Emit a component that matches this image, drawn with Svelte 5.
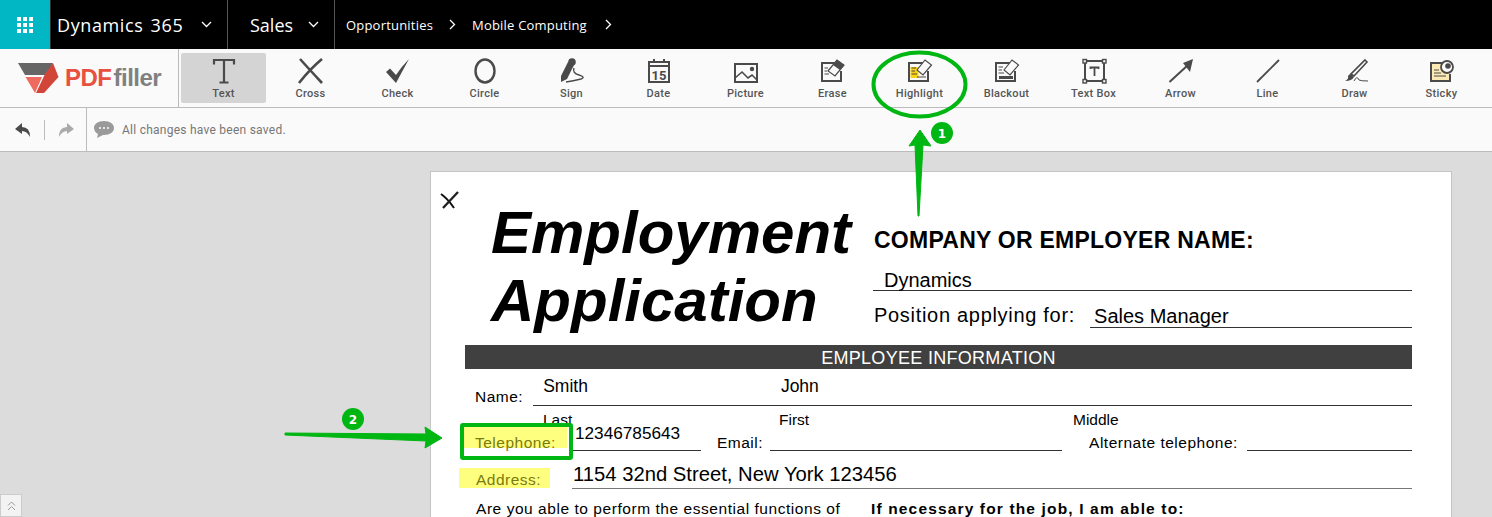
<script>
    const tools = [
        { id: 'text', label: 'Text', active: true },
        { id: 'cross', label: 'Cross' },
        { id: 'check', label: 'Check' },
        { id: 'circle', label: 'Circle' },
        { id: 'sign', label: 'Sign' },
        { id: 'date', label: 'Date' },
        { id: 'picture', label: 'Picture' },
        { id: 'erase', label: 'Erase' },
        { id: 'highlight', label: 'Highlight' },
        { id: 'blackout', label: 'Blackout' },
        { id: 'textbox', label: 'Text Box' },
        { id: 'arrow', label: 'Arrow' },
        { id: 'line', label: 'Line' },
        { id: 'draw', label: 'Draw' },
        { id: 'sticky', label: 'Sticky' }
    ];
</script>

<div class="page">
    <header class="topbar">
        <div class="waffle">
            <svg width="16" height="16" viewBox="0 0 16 16" fill="#fff">
                {#each [0, 6, 12] as y}
                    {#each [0, 6, 12] as x}
                        <rect x={x} y={y} width="4" height="4" />
                    {/each}
                {/each}
            </svg>
        </div>
        <div class="app-name">
            <span>Dynamics 365</span>
            <svg class="chev" width="11" height="7" viewBox="0 0 11 7"><path d="M1 1l4.500 4.500L10 1" /></svg>
        </div>
        <div class="area-name">
            <span>Sales</span>
            <svg class="chev" width="11" height="7" viewBox="0 0 11 7"><path d="M1 1l4.500 4.500L10 1" /></svg>
        </div>
        <nav class="crumbs">
            <span>Opportunities</span>
            <svg class="crumb-arrow" width="7" height="11" viewBox="0 0 7 11"><path d="M1 1l4.500 4.500L1 10" /></svg>
            <span>Mobile Computing</span>
            <svg class="crumb-arrow last" width="7" height="11" viewBox="0 0 7 11"><path d="M1 1l4.500 4.500L1 10" /></svg>
        </nav>
    </header>

    <div class="toolbar">
        <div class="logo">
            <svg width="41" height="31" viewBox="0 0 41 31">
                <path d="M0 0H35L28 12H7Z" fill="#666" />
                <path d="M7.500 14H24L17 30Z" fill="#ee6a5f" />
                <path d="M35 0L40.500 14L26 30H18L27 11Z" fill="#d2463a" />
            </svg>
            <span class="logo-pdf">PDF</span><span class="logo-filler">filler</span>
        </div>
        <div class="tools">
            {#each tools as tool}
                <div class="tool" class:active={tool.active}>
                    <svg class="tool-icon" width="30" height="30" viewBox="0 0 30 30">
                        {#if tool.id === 'text'}
                            <path d="M5 8.500V4H25V8.500M15 4V26M10.500 26.500H19.500" fill="none" stroke="#4a4a4a" stroke-width="2.200" />
                        {:else if tool.id === 'cross'}
                            <path d="M4 3Q13 13 26 27M26 3Q14 13 3 27" fill="none" stroke="#4a4a4a" stroke-width="2.600" />
                        {:else if tool.id === 'check'}
                            <path d="M3 16L7 12.500L13 19Q19 10 26 3Q20 14 13 27Z" fill="#4a4a4a" />
                        {:else if tool.id === 'circle'}
                            <ellipse cx="15" cy="15" rx="9.500" ry="11.500" fill="none" stroke="#4a4a4a" stroke-width="2.400" />
                        {:else if tool.id === 'sign'}
                            <path d="M4 26L4 20L11 6L17 9L10 23Z" fill="#4a4a4a" />
                            <circle cx="15" cy="6" r="3.800" fill="#4a4a4a" />
                            <path d="M17 12Q15 17 22 19Q29 21 24 23Q16 25 9 26" fill="none" stroke="#4a4a4a" stroke-width="1.400" />
                        {:else if tool.id === 'date'}
                            <path d="M5 6H25V26H5Z" fill="none" stroke="#4a4a4a" stroke-width="2" />
                            <path d="M5 10H25M10 3V7M20 3V7" stroke="#4a4a4a" stroke-width="2" />
                            <text x="15" y="23.500" class="cal">15</text>
                        {:else if tool.id === 'picture'}
                            <path d="M4 8H26V26H4Z" fill="none" stroke="#4a4a4a" stroke-width="2" />
                            <path d="M4 22L11 16L17 22L21 19L26 24" fill="none" stroke="#4a4a4a" stroke-width="1.600" />
                            <circle cx="21" cy="13" r="2.200" fill="#4a4a4a" />
                        {:else if tool.id === 'erase'}
                            <path d="M18 7H4V25H23V15" fill="none" stroke="#4a4a4a" stroke-width="2" />
                            <path d="M10 15L19 4L26 9L17 20Z" fill="#fafafa" stroke="#4a4a4a" stroke-width="1.200" />
                            <path d="M15 9L19 4L26 9L22 14Z" fill="#4a4a4a" />
                            <path d="M6.500 12H10M6.500 15H9M6.500 18H11" stroke="#4a4a4a" />
                        {:else if tool.id === 'highlight'}
                            <rect x="5.500" y="11" width="8" height="11" fill="#fdd20e" />
                            <path d="M18 7H4V25H23V15" fill="none" stroke="#4a4a4a" stroke-width="2" />
                            <path d="M12 14L20 4L26.500 9L18 19Z" fill="#fafafa" stroke="#4a4a4a" stroke-width="1.200" />
                            <path d="M6.500 12H11M6.500 15H10M6.500 18H12M12 21H21" stroke="#4a4a4a" />
                        {:else if tool.id === 'blackout'}
                            <path d="M18 7H4V25H23V15" fill="none" stroke="#4a4a4a" stroke-width="2" />
                            <path d="M12 14L20 4L26.500 9L18 19Z" fill="#fafafa" stroke="#4a4a4a" stroke-width="1.200" />
                            <rect x="7" y="20" width="14" height="3" fill="#4a4a4a" />
                            <path d="M6.500 11H11M6.500 14H10M6.500 17H12" stroke="#4a4a4a" />
                        {:else if tool.id === 'textbox'}
                            <path d="M6 5H25V25H6Z" fill="none" stroke="#4a4a4a" stroke-width="2" />
                            <g fill="#fafafa" stroke="#4a4a4a" stroke-width="1.400">
                                <rect x="4" y="3.500" width="3.500" height="3.500" />
                                <rect x="23.500" y="3.500" width="3.500" height="3.500" />
                                <rect x="4" y="23.500" width="3.500" height="3.500" />
                                <rect x="23.500" y="23.500" width="3.500" height="3.500" />
                            </g>
                            <path d="M11.500 13V11.500H19.500V13M15.500 11.500V20" fill="none" stroke="#4a4a4a" stroke-width="1.800" />
                        {:else if tool.id === 'arrow'}
                            <path d="M3.500 26L22 9" stroke="#4a4a4a" stroke-width="2" />
                            <path d="M27 3L17 7L24 16Z" fill="#4a4a4a" />
                        {:else if tool.id === 'line'}
                            <path d="M4 26L26 4" stroke="#4a4a4a" stroke-width="1.800" />
                        {:else if tool.id === 'draw'}
                            <path d="M25 4L27 6L14 20L11 18Z" fill="none" stroke="#4a4a4a" stroke-width="1.600" />
                            <path d="M11 18L14 21Q12 25 5 25Q9 23 8 20Q9 18 11 18Z" fill="#4a4a4a" />
                            <path d="M14 25Q17 19 19 24Q21 25 28 25" fill="none" stroke="#4a4a4a" />
                        {:else if tool.id === 'sticky'}
                            <path d="M4 7H18V15H23V25H4Z" fill="#fbeab5" />
                            <path d="M15 7H4V25H23V18" fill="none" stroke="#4a4a4a" stroke-width="2" />
                            <circle cx="20" cy="11" r="6" fill="#fafafa" stroke="#4a4a4a" stroke-width="1.800" />
                            <circle cx="21" cy="10" r="2.800" fill="#4a4a4a" />
                            <path d="M7 14H12M7 17H14M7 20H19" stroke="#4a4a4a" />
                        {/if}
                    </svg>
                    <span class="tool-label">{tool.label}</span>
                </div>
            {/each}
        </div>
    </div>

    <div class="statusbar">
        <div class="history">
            <svg width="18" height="14" viewBox="0 0 18 14" fill="#4a4a4a"><path d="M8 0L1 6L8 11V8Q13 8 16 14Q16 4 8 4Z" /></svg>
            <i class="sep"></i>
            <svg width="18" height="14" viewBox="0 0 18 14" fill="#aaa"><path d="M10 0L17 6L10 11V8Q5 8 2 14Q2 4 10 4Z" /></svg>
        </div>
        <div class="saved">
            <svg width="20" height="17" viewBox="0 0 20 17">
                <path d="M10 0C4 0 0 3 0 7C0 10 2 12 4 13L3 17L9 14H10C16 14 20 11 20 7C20 3 16 0 10 0Z" fill="#9a9a9a" />
                <g fill="#fff"><circle cx="6" cy="7" r="1" /><circle cx="10" cy="7" r="1" /><circle cx="14" cy="7" r="1" /></g>
            </svg>
            <span>All changes have been saved.</span>
        </div>
    </div>

    <main class="workspace">
        <div class="collapse">
            <svg width="9" height="10" viewBox="0 0 9 10"><path d="M1 4.500L4.500 1L8 4.500M1 9L4.500 5.500L8 9" /></svg>
        </div>
        <article class="sheet">
            <svg class="mark" width="20" height="20" viewBox="0 0 20 20">
                <path d="M1 3Q8 8 14 17" fill="none" stroke="#111" stroke-width="2" />
                <path d="M18 1L3 17" fill="none" stroke="#222" stroke-width="2.400" />
            </svg>
            <div class="head">
                <h1>Employment<br />Application</h1>
                <div class="company">
                    <h2>COMPANY OR EMPLOYER NAME:</h2>
                    <div class="filled company-name">Dynamics</div>
                    <div class="position">
                        <span>Position applying for:</span>
                        <div class="filled">Sales Manager</div>
                    </div>
                </div>
            </div>
            <div class="band">EMPLOYEE INFORMATION</div>
            <div class="name-row">
                <span class="lbl">Name:</span>
                <div class="name-line"><span>Smith</span><span class="first">John</span></div>
            </div>
            <div class="sub-row"><span>Last</span><span>First</span><span>Middle</span></div>
            <div class="tel-row">
                <span class="lbl mark-y tel">Telephone:</span>
                <span class="line tel-val">12346785643</span>
                <span class="lbl">Email:</span>
                <span class="line email"></span>
                <span class="lbl">Alternate telephone:</span>
                <span class="line alt"></span>
            </div>
            <div class="addr-row">
                <span class="lbl mark-y addr">Address:</span>
                <span class="line addr-val">1154 32nd Street, New York 123456</span>
            </div>
            <div class="para-row">
                <span>Are you able to perform the essential functions of</span>
                <b>If necessary for the job, I am able to:</b>
            </div>
        </article>

        <svg class="overlay" width="1492" height="517" viewBox="0 0 1492 517">
            <ellipse cx="919.500" cy="84.500" rx="46" ry="32" fill="none" stroke="#00b612" stroke-width="4" />
            <path d="M918 216L915 145L909 146L920 130L931 146L923 145L919 216Z" fill="#00b612" stroke="#00b612" stroke-linejoin="round" />
            <circle cx="942" cy="133" r="11" fill="#00b612" />
            <text x="942" y="137.500" class="num">1</text>
            <path d="M285 433L426 434L425 427L442 438L425 448L426 441L285 435Z" fill="#00b612" stroke="#00b612" stroke-linejoin="round" />
            <circle cx="353" cy="419" r="11" fill="#00b612" />
            <text x="353" y="423.500" class="num">2</text>
            <rect x="462" y="425" width="109" height="33" rx="1" fill="none" stroke="#00b612" stroke-width="4" />
        </svg>
    </main>
</div>

<style>
    :global(body) {
        margin: 0;
        overflow: hidden;
    }

    .page {
        width: 1492px;
        height: 517px;
        display: flex;
        flex-direction: column;
        overflow: hidden;
        font-family: "Liberation Sans", Arial, sans-serif;
    }

    .topbar {
        height: 49px;
        flex: none;
        display: flex;
        background: #000;
        color: #fff;
        font-family: "Open Sans", "Noto Sans", sans-serif;
    }

    .waffle {
        width: 50px;
        background: #00b7c3;
        display: flex;
        align-items: center;
        justify-content: center;
        border-right: 1px solid #333;
    }

    .app-name,
    .area-name {
        display: flex;
        align-items: center;
        border-right: 1px solid #555;
        font-size: 18px;
        box-sizing: border-box;
    }

    .app-name {
        width: 177px;
        padding-left: 6px;
        gap: 18px;
        letter-spacing: 0.6px;
        word-spacing: 2px;
    }

    .area-name {
        width: 107px;
        padding-left: 22px;
        gap: 15px;
    }

    .chev,
    .crumb-arrow {
        fill: none;
        stroke: #fff;
        stroke-width: 1.300;
    }

    .crumbs {
        display: flex;
        align-items: center;
        gap: 16px;
        padding-left: 11px;
        font-size: 13px;
        letter-spacing: 0.2px;
    }

    .crumb-arrow.last {
        margin-left: 2px;
    }

    .toolbar {
        height: 59px;
        flex: none;
        display: flex;
        background: #fafafa;
        border-bottom: 1px solid #bbb;
        box-sizing: border-box;
    }

    .logo {
        width: 179px;
        flex: none;
        box-sizing: border-box;
        border-right: 1px solid #bbb;
        display: flex;
        align-items: center;
        padding-left: 18px;
        font-weight: 700;
        font-size: 24px;
        letter-spacing: -0.5px;
    }

    .logo svg {
        margin-right: 6px;
    }

    .logo-pdf {
        color: #e8503f;
    }

    .logo-filler {
        color: #808080;
        margin-left: 2px;
    }

    .tools {
        display: flex;
        padding: 4px 0 0 1px;
    }

    .tool {
        width: 85px;
        height: 50px;
        margin: 0 1px;
        display: flex;
        flex-direction: column;
        align-items: center;
        border-radius: 2px;
        color: #555;
        font-size: 11px;
        font-family: Roboto, "Liberation Sans", sans-serif;
    }

    .tool.active {
        background: #d4d4d4;
    }

    .tool-icon {
        margin-top: 3px;
        flex: none;
    }

    .tool-label {
        margin-top: 1px;
        font-weight: 500;
        letter-spacing: 0.3px;
        white-space: nowrap;
    }

    .cal {
        font-size: 13px;
        font-weight: 700;
        fill: #4a4a4a;
        text-anchor: middle;
    }

    .statusbar {
        height: 44px;
        flex: none;
        display: flex;
        background: #fafafa;
        border-bottom: 1px solid #bbb;
        box-sizing: border-box;
    }

    .history {
        width: 87px;
        flex: none;
        box-sizing: border-box;
        border-right: 1px solid #bbb;
        display: flex;
        align-items: center;
        gap: 12px;
        padding-left: 14px;
    }

    .sep {
        width: 1px;
        height: 20px;
        background: #bbb;
    }

    .saved {
        display: flex;
        align-items: center;
        gap: 8px;
        padding-left: 7px;
        font-family: Roboto, "Liberation Sans", sans-serif;
        font-size: 12px;
        letter-spacing: 0.25px;
        color: #777;
    }

    .workspace {
        flex: 1;
        position: relative;
        background: #dcdcdc;
        padding: 19px 40px 0 430px;
        min-height: 0;
    }

    .collapse {
        position: absolute;
        left: 0;
        bottom: 0;
        width: 22px;
        height: 23px;
        box-sizing: border-box;
        background: #f3f3f3;
        border: 1px solid #ccc;
        display: flex;
        align-items: center;
        justify-content: center;
    }

    .collapse path {
        fill: none;
        stroke: #999;
    }

    .sheet {
        position: relative;
        height: 346px;
        background: #fff;
        border: 1px solid #c4c4c4;
        border-bottom: none;
        box-sizing: border-box;
        padding: 0 39px 0 34px;
        color: #000;
        font-size: 15.500px;
    }

    .mark {
        position: absolute;
        left: 9px;
        top: 19px;
    }

    .head {
        display: flex;
    }

    h1 {
        margin: 27px 0 0 26px;
        width: 383px;
        flex: none;
        font-size: 60px;
        line-height: 68px;
        font-style: italic;
        font-weight: 700;
    }

    .company {
        flex: 1;
    }

    h2 {
        margin: 54px 0 0;
        font-size: 23px;
        line-height: 28px;
        font-weight: 700;
        letter-spacing: 0.25px;
    }

    .filled {
        font-size: 20px;
        border-bottom: 1px solid #333;
    }

    .company-name {
        margin-top: 17px;
        padding-left: 11px;
        margin-left: -1px;
        line-height: 19px;
    }

    .position {
        display: flex;
        margin-top: 12px;
        gap: 15px;
        font-size: 20px;
        line-height: 25px;
        letter-spacing: 0.7px;
    }

    .position .filled {
        flex: 1;
        padding: 2px 0 0 4px;
        line-height: 22px;
        height: 22px;
        letter-spacing: 0;
    }

    .band {
        margin-top: 10px;
        height: 24px;
        line-height: 26px;
        background: #404040;
        color: #fff;
        text-align: center;
        font-size: 18px;
        letter-spacing: 0.3px;
    }

    .name-row {
        display: flex;
        margin-top: 5px;
        height: 31px;
        padding-left: 10px;
    }

    .lbl {
        align-self: flex-end;
        line-height: 17px;
        flex: none;
        letter-spacing: 0.5px;
    }

    .name-row .lbl {
        margin-right: 10px;
    }

    .name-line {
        flex: 1;
        border-bottom: 1px solid #333;
        font-size: 17.500px;
        padding-left: 10px;
        display: flex;
        height: 31px;
        line-height: 24px;
    }

    .first {
        margin-left: 193px;
    }

    .sub-row {
        display: flex;
        padding-left: 78px;
        line-height: 17px;
        margin-top: 6px;
        height: 8px;
    }

    .sub-row span:nth-child(1) {
        width: 236px;
    }

    .sub-row span:nth-child(2) {
        width: 294px;
    }

    .tel-row {
        display: flex;
        align-items: flex-end;
        margin-top: 3px;
        height: 29px;
        margin-left: -5px;
    }

    .mark-y {
        background: #ffff7f;
        color: #7a7a10;
    }

    .tel {
        width: 107px;
        box-sizing: border-box;
        padding-left: 15px;
        height: 21px;
        line-height: 31px;
        align-self: flex-start;
        margin-top: 5px;
    }

    .line {
        border-bottom: 1px solid #333;
        display: block;
        flex: none;
    }

    .tel-val {
        width: 128px;
        height: 29px;
        font-size: 17.200px;
        line-height: 23px;
        margin-left: 6px;
        margin-right: 16px;
        box-sizing: border-box;
        padding-left: 2px;
    }

    .email {
        width: 292px;
        margin-left: 7px;
        margin-right: 27px;
    }

    .alt {
        width: 165px;
        margin-left: 9px;
    }

    .addr-row {
        display: flex;
        margin-top: 10px;
        margin-left: -6px;
        height: 41px;
    }

    .addr {
        width: 91px;
        height: 20px;
        box-sizing: border-box;
        padding-left: 17px;
        line-height: 24px;
        margin-top: 7px;
        align-self: flex-start;
    }

    .addr-val {
        flex: 1;
        height: 27px;
        margin-left: 22px;
        font-size: 20.250px;
        line-height: 26px;
        border-bottom: 1px solid #777;
        padding-left: 1px;
    }

    .para-row {
        display: flex;
        padding-left: 11px;
        line-height: 14px;
        letter-spacing: 0.55px;
        white-space: nowrap;
    }

    .para-row span {
        width: 395px;
        flex: none;
    }

    .para-row b {
        font-size: 15.500px;
        letter-spacing: 1.15px;
    }

    .overlay {
        position: absolute;
        left: 0;
        top: -152px;
        pointer-events: none;
        overflow: visible;
    }

    .num {
        fill: #fff;
        font-size: 12px;
        font-weight: 700;
        text-anchor: middle;
        font-family: "DejaVu Sans", sans-serif;
    }
</style>
